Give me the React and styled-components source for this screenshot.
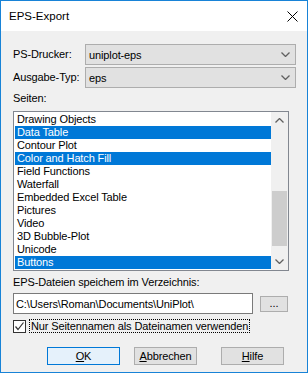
import styled, { createGlobalStyle } from "styled-components";

const GlobalStyle = createGlobalStyle`
  body {
    margin: 0;
    font-family: "Liberation Sans", Arial, sans-serif;
    font-size: 11px;
    letter-spacing: -0.12px;
    color: #000;
  }
`;

const pages = [
  { name: "Drawing Objects" },
  { name: "Data Table", selected: true },
  { name: "Contour Plot" },
  { name: "Color and Hatch Fill", selected: true },
  { name: "Field Functions" },
  { name: "Waterfall" },
  { name: "Embedded Excel Table" },
  { name: "Pictures" },
  { name: "Video" },
  { name: "3D Bubble-Plot" },
  { name: "Unicode" },
  { name: "Buttons", selected: true },
];

const Chevron = ({ up, color = "#606060" }) => (
  <svg width="9" height="5" viewBox="0 0 9 5">
    <polyline
      points={up ? "0.5,4.5 4.5,0.5 8.5,4.5" : "0.5,0.5 4.5,4.5 8.5,0.5"}
      fill="none"
      stroke={color}
      strokeWidth="1.3"
    />
  </svg>
);

const App = () => {
  return (
    <>
      <GlobalStyle />
      <Window>
        <TitleBar>
          <span>EPS-Export</span>
          <svg width="11" height="11" viewBox="0 0 11 11">
            <path d="M0.5 0.5 L10.5 10.5 M10.5 0.5 L0.5 10.5" stroke="#000" strokeWidth="1" />
          </svg>
        </TitleBar>
        <Body>
          <FormGrid>
            <Label>PS-Drucker:</Label>
            <Combo>
              <span>uniplot-eps</span>
              <Chevron />
            </Combo>
            <Label>Ausgabe-Typ:</Label>
            <Combo>
              <span>eps</span>
              <Chevron />
            </Combo>
          </FormGrid>
          <SectionLabel $top={4}>Seiten:</SectionLabel>
          <ListBox>
            <Items>
              {pages.map((p) => (
                <Item key={p.name} $selected={p.selected}>
                  {p.name}
                </Item>
              ))}
            </Items>
            <ScrollBar>
              <ScrollArrow>
                <Chevron up />
              </ScrollArrow>
              <Track>
                <Thumb $top={62} $height={55} />
              </Track>
              <ScrollArrow>
                <Chevron />
              </ScrollArrow>
            </ScrollBar>
          </ListBox>
          <SectionLabel $top={5}>EPS-Dateien speichem im Verzeichnis:</SectionLabel>
          <PathRow>
            <TextBox>C:\Users\Roman\Documents\UniPlot\</TextBox>
            <SmallButton>...</SmallButton>
          </PathRow>
          <CheckRow>
            <CheckBox>
              <svg width="11" height="11" viewBox="0 0 11 11">
                <polyline points="1.5,5.5 4,8.5 9.5,1.5" fill="none" stroke="#333" strokeWidth="1.2" />
              </svg>
            </CheckBox>
            <FocusLabel>Nur Seitennamen als Dateinamen verwenden</FocusLabel>
          </CheckRow>
          <ButtonRow>
            <DialogButton $width={73} $default>
              <u>O</u>K
            </DialogButton>
            <DialogButton $width={63} $left={14}>
              <u>A</u>bbrechen
            </DialogButton>
            <DialogButton $width={63} $left={24}>
              <u>H</u>ilfe
            </DialogButton>
          </ButtonRow>
        </Body>
      </Window>
    </>
  );
};

export default App;

const Window = styled.div`
  width: 308px;
  height: 373px;
  box-sizing: border-box;
  border: 1px solid #1883d7;
  background: #f0f0f0;
  display: flex;
  flex-direction: column;
`;

const TitleBar = styled.div`
  height: 30px;
  background: #fff;
  display: flex;
  align-items: center;
  justify-content: space-between;
  padding: 0 9px 0 8px;
  font-size: 11.5px;
  letter-spacing: 0;

  svg {
    display: block;
  }
`;

const Body = styled.div`
  padding: 13px 11px 0 12px;
  display: flex;
  flex-direction: column;
`;

const FormGrid = styled.div`
  display: grid;
  grid-template-columns: 72px 1fr;
  row-gap: 2px;
  align-items: center;
`;

const Label = styled.div`
  line-height: 13px;
`;

const Combo = styled.div`
  height: 21px;
  box-sizing: border-box;
  background: #e1e1e1;
  border: 1px solid #adadad;
  display: flex;
  align-items: center;
  justify-content: space-between;
  padding: 0 5px 0 3px;

  svg {
    display: block;
  }
`;

const SectionLabel = styled.div`
  line-height: 13px;
  margin-top: ${(p) => p.$top}px;
`;

const ListBox = styled.div`
  margin-top: 6px;
  width: 276px;
  height: 160px;
  box-sizing: border-box;
  border: 1px solid #828790;
  background: #fff;
  display: flex;
`;

const Items = styled.div`
  flex: 1;
  padding: 1px 0 1px 1px;
`;

const Item = styled.div`
  height: 13px;
  line-height: 13px;
  padding-left: 2px;
  white-space: nowrap;
  background: ${(p) => (p.$selected ? "#0078d7" : "transparent")};
  color: ${(p) => (p.$selected ? "#fff" : "#000")};
`;

const ScrollBar = styled.div`
  width: 17px;
  background: #f0f0f0;
  display: flex;
  flex-direction: column;
`;

const ScrollArrow = styled.div`
  height: 17px;
  display: flex;
  align-items: center;
  justify-content: center;

  svg {
    display: block;
  }
`;

const Track = styled.div`
  flex: 1;
  display: flex;
  flex-direction: column;
`;

const Thumb = styled.div`
  margin: ${(p) => p.$top}px 1px 0 1px;
  height: ${(p) => p.$height}px;
  background: #cdcdcd;
`;

const PathRow = styled.div`
  margin-top: 4px;
  display: flex;
  align-items: center;
  gap: 7px;
`;

const TextBox = styled.div`
  width: 240px;
  height: 21px;
  box-sizing: border-box;
  border: 1px solid #7a7a7a;
  background: #fff;
  padding-left: 2px;
  display: flex;
  align-items: center;
  white-space: nowrap;
`;

const SmallButton = styled.div`
  width: 28px;
  height: 16px;
  box-sizing: border-box;
  background: #e1e1e1;
  border: 1px solid #adadad;
  display: flex;
  align-items: center;
  justify-content: center;
  line-height: 1;
`;

const CheckRow = styled.div`
  margin-top: 5px;
  display: flex;
  align-items: center;
`;

const CheckBox = styled.div`
  width: 13px;
  height: 13px;
  box-sizing: border-box;
  border: 1px solid #333;
  background: #fff;

  svg {
    display: block;
  }
`;

const FocusLabel = styled.div`
  margin-left: 3px;
  border: 1px dotted #000;
  padding: 0 1px;
  line-height: 12px;
  white-space: nowrap;
`;

const ButtonRow = styled.div`
  margin-top: 14px;
  display: flex;
  padding-left: 34px;
`;

const DialogButton = styled.div`
  width: ${(p) => p.$width}px;
  margin-left: ${(p) => p.$left || 0}px;
  height: 18px;
  box-sizing: border-box;
  background: ${(p) => (p.$default ? "#e5f1fb" : "#e1e1e1")};
  border: 1px solid ${(p) => (p.$default ? "#0078d7" : "#adadad")};
  display: flex;
  align-items: center;
  justify-content: center;
`;
